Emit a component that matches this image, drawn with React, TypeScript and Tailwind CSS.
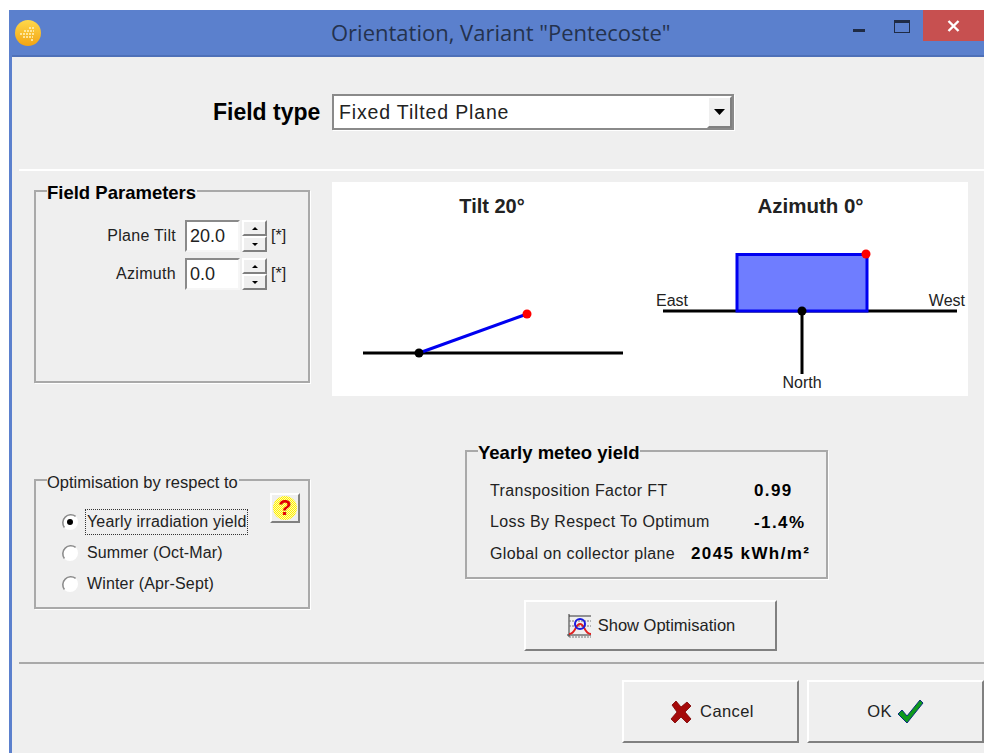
import React from "react";

const raised = "border-2 border-t-white border-l-white border-r-[#808080] border-b-[#808080] bg-[#efefef]";

function Group({ title, bold, className, children }: { title: string; bold?: boolean; className: string; children?: React.ReactNode }) {
  return (
    <div className={`relative border-2 border-[#a9a9a9] shadow-[1px_1px_0_#fff] ${className}`}>
      <span className={`absolute left-[11px] top-[-9px] bg-[#efefef] pr-[1px] leading-[20px] whitespace-nowrap ${bold ? "text-[18.5px] font-bold text-black" : "text-[16.5px] text-[#222]"}`}>
        {title}
      </span>
      {children}
    </div>
  );
}

function Spin({ label, value }: { label: string; value: string }) {
  return (
    <div className="flex items-center h-[32px]">
      <span className="w-[149px] pr-[9px] text-right text-[16px] text-[#222] leading-none tracking-[0.3px]">{label}</span>
      <div className="w-[55px] h-[32px] bg-white border-2 border-t-[#8a8a8a] border-l-[#8a8a8a] border-r-[#f6f6f6] border-b-[#f6f6f6] flex items-center pl-[3px] text-[18px] text-[#222]">
        {value}
      </div>
      <div className="ml-[2px] w-[25px] h-[32px] flex flex-col">
        <div className={`h-[16px] flex items-center justify-center ${raised}`}>
          <svg width="6" height="3"><path d="M3 0 6 3H0z" fill="#000" /></svg>
        </div>
        <div className={`h-[16px] flex items-center justify-center ${raised}`}>
          <svg width="6" height="3"><path d="M0 0H6L3 3z" fill="#000" /></svg>
        </div>
      </div>
      <span className="ml-[4px] text-[16px] text-[#222] leading-none">[*]</span>
    </div>
  );
}

function Radio({ label, checked }: { label: string; checked?: boolean }) {
  return (
    <div className="flex items-center h-[31px]">
      <svg width="18" height="18" viewBox="0 0 18 18" className="shrink-0">
        <circle cx="9" cy="9" r="8" fill="#fff" />
        <path d="M3.4 14.6A8 8 0 0 1 14.6 3.4" fill="none" stroke="#8c8c8c" strokeWidth="1.6" />
        {checked && <circle cx="9" cy="9" r="3" fill="#000" />}
      </svg>
      <span className={`ml-[7px] pl-[1px] leading-[24px] text-[16px] text-[#222] whitespace-nowrap tracking-[0.15px] ${checked ? "outline-1 outline-dotted outline-[#333]" : ""}`}>
        {label}
      </span>
    </div>
  );
}

function YieldRow({ label, value, labelClass }: { label: string; value: string; labelClass: string }) {
  return (
    <div className="flex items-center h-[31.5px] whitespace-nowrap">
      <span className={`text-[16px] text-[#222] tracking-[0.36px] ${labelClass}`}>{label}</span>
      <span className="text-[17px] font-bold text-black tracking-[1.4px]">{value}</span>
    </div>
  );
}

// Side view of the tilted plane and top view of its azimuth
function OrientationDiagram() {
  const f = { fontFamily: "'Liberation Sans', sans-serif" };
  return (
    <svg width="636" height="214" viewBox="332 182 636 214" className="block bg-white">
      <text x="492" y="213" textAnchor="middle" fontSize="20" fontWeight="700" fill="#222" style={f}>Tilt 20°</text>
      <path d="M363 353H623" stroke="#000" strokeWidth="3" />
      <path d="M419 353 527 314" stroke="#0000f0" strokeWidth="3" />
      <circle cx="419" cy="353" r="4.5" fill="#000" />
      <circle cx="527" cy="314" r="4.5" fill="#f00" />

      <text x="810.5" y="213" textAnchor="middle" fontSize="20.5" fontWeight="700" fill="#222" style={f}>Azimuth 0°</text>
      <path d="M663 311H957" stroke="#000" strokeWidth="3" />
      <rect x="737" y="254.5" width="130" height="56.5" fill="#6f7dff" stroke="#0000f0" strokeWidth="3" />
      <path d="M802 311V374" stroke="#000" strokeWidth="3" />
      <circle cx="802" cy="311" r="4.5" fill="#000" />
      <circle cx="866" cy="254" r="4.5" fill="#f00" />
      <text x="656" y="306" fontSize="16" fill="#222" style={f}>East</text>
      <text x="965" y="306" textAnchor="end" fontSize="16" fill="#222" style={f}>West</text>
      <text x="802" y="388" textAnchor="middle" fontSize="16" fill="#222" style={f}>North</text>
    </svg>
  );
}

function ChartIcon() {
  return (
    <svg width="26" height="26" viewBox="0 0 26 26" className="shrink-0">
      <path d="M3 1V24M1 22H25M3 3H25" stroke="#333" strokeWidth="1" fill="none" />
      <path d="M3 8H25M3 13H25M3 24H25" stroke="#777" strokeWidth="1" strokeDasharray="2 1" fill="none" />
      <path d="M3 21C10 21 9 11 14 11S18 21 25 21" stroke="#e02020" strokeWidth="2" fill="none" />
      <circle cx="14" cy="11" r="5" stroke="#1a1ae0" strokeWidth="2" fill="none" />
    </svg>
  );
}

export default function App() {
  return (
    <div className="w-[984px] h-[753px] overflow-hidden bg-white pt-[10px] pl-[9px] font-['Liberation_Sans',sans-serif]">
      <div className="h-full flex flex-col bg-[#5b80cd] pl-[3px]">
        {/* Title bar */}
        <div className="relative h-[47px] shrink-0 flex items-center border-b-2 border-[#4e70b8]">
          <svg width="28" height="28" viewBox="0 0 28 28" className="absolute left-[2px] top-[9px]">
            <defs>
              <linearGradient id="sun" x1="0" y1="0" x2="0" y2="1">
                <stop offset="0" stopColor="#ffd84a" />
                <stop offset="1" stopColor="#f2a414" />
              </linearGradient>
            </defs>
            <circle cx="14" cy="14" r="13" fill="url(#sun)" />
            <path d="M6 15h14M10 12h10M9 18h10M15 9h6M17 21h3" stroke="#fff3c0" strokeWidth="1.4" strokeDasharray="2 1" />
          </svg>
          <div className="w-full pl-[319px] pb-[2px] font-['Open_Sans',sans-serif] text-[22px] text-[#24324e] leading-none whitespace-nowrap">
            Orientation, Variant "Pentecoste"
          </div>
          <div className="absolute right-0 top-0 flex items-start">
            <div className="w-[12px] h-[3px] mt-[19px] bg-[#1f2b45]" />
            <div className="w-[16px] h-[13px] mt-[10px] ml-[29px] border border-[#1f2b45] border-t-[3px]" />
            <div className="w-[61px] h-[31px] ml-[13px] bg-[#c75050] flex items-center justify-center">
              <svg width="13" height="12" viewBox="0 0 13 12">
                <path d="M1.5 1 11.5 11M11.5 1 1.5 11" stroke="#fff" strokeWidth="2.4" />
              </svg>
            </div>
          </div>
        </div>

        <div className="flex-1 flex flex-col bg-[#efefef]">
          {/* Field type selector */}
          <div className="h-[112px] shrink-0 flex items-start pt-[37px] pl-[201px]">
            <span className="w-[119px] text-[23px] leading-[36px] font-bold text-black whitespace-nowrap">Field type</span>
            <div className="w-[402px] h-[36px] flex border-2 border-[#8a8a8a] shadow-[1px_1px_0_#fff] bg-white">
              <span className="flex-1 pl-[5px] text-[19.5px] leading-[32px] text-[#222] tracking-[0.85px]">Fixed Tilted Plane</span>
              <div className={`w-[25px] flex items-center justify-center ${raised}`}>
                <svg width="11" height="6"><path d="M0 0H11L5.5 6z" fill="#000" /></svg>
              </div>
            </div>
          </div>

          {/* Parameters and results */}
          <div className="ml-[7px] h-[495px] shrink-0 flex border-t-2 border-white border-b-2 border-b-[#a9a9a9] pl-[15px]">
            <div className="w-[276px] shrink-0 pt-[19px]">
              <Group title="Field Parameters" bold className="h-[193px] pt-[28px]">
                <Spin label="Plane Tilt" value="20.0" />
                <div className="mt-[6px]">
                  <Spin label="Azimuth" value="0.0" />
                </div>
              </Group>
              <Group title="Optimisation by respect to" className="mt-[96px] h-[130px]">
                <div className="relative pl-[25px] pt-[25px]">
                  <Radio label="Yearly irradiation yield" checked />
                  <Radio label="Summer (Oct-Mar)" />
                  <Radio label="Winter (Apr-Sept)" />
                  <div className={`absolute left-[234px] top-[12px] w-[30px] h-[30px] flex items-center justify-center ${raised}`}>
                    <span className="w-[24px] h-[24px] rounded-full bg-[#fbf55a] bg-[repeating-conic-gradient(#fff200_0_25%,#fff9b0_0_50%)] bg-[length:2px_2px] flex items-center justify-center text-[22px] font-bold leading-none text-[#e00000]">?</span>
                  </div>
                </div>
              </Group>
            </div>

            <div className="ml-[22px] w-[636px] shrink-0 pt-[11px]">
              <OrientationDiagram />
              <Group title="Yearly meteo yield" bold className="ml-[133px] mt-[54px] w-[363px] h-[129px] pl-[23px] pt-[23px]">
                <YieldRow label="Transposition Factor FT" value="0.99" labelClass="w-[264px]" />
                <YieldRow label="Loss By Respect To Optimum" value="-1.4%" labelClass="w-[264px]" />
                <YieldRow label="Global on collector plane" value="2045 kWh/m²" labelClass="w-[201px]" />
              </Group>
              <div className={`ml-[192px] mt-[21px] w-[253px] h-[51px] flex items-center justify-center ${raised}`}>
                <ChartIcon />
                <span className="ml-[6px] text-[16.5px] text-[#222]">Show Optimisation</span>
              </div>
            </div>
          </div>

          {/* Dialog actions */}
          <div className="flex-1 flex items-start justify-end pt-[16px] gap-[8px]">
            <div className={`w-[177px] h-[63px] pl-[3px] flex items-center justify-center ${raised}`}>
              <svg width="22" height="24" viewBox="0 0 22 24">
                <path d="M2 5 6 1l5 6 6-5 4 4-6 6 6 7-4 4-6-6-6 6-4-4 6-7z" fill="#a50a0a" stroke="#7a0000" strokeWidth="0.8" />
              </svg>
              <span className="ml-[8px] text-[16.5px] text-[#222] tracking-[0.4px]">Cancel</span>
            </div>
            <div className={`w-[177px] h-[63px] flex items-center justify-center ${raised}`}>
              <span className="text-[16.5px] text-[#222] tracking-[0.4px]">OK</span>
              <svg width="27" height="26" viewBox="0 0 27 26" className="ml-[5px]">
                <path d="M1 15 5 11l5 6L23 1l3 3L10 24z" fill="#0f9a1c" stroke="#0a2a80" strokeWidth="1" />
              </svg>
            </div>
          </div>
        </div>
      </div>
    </div>
  );
}
